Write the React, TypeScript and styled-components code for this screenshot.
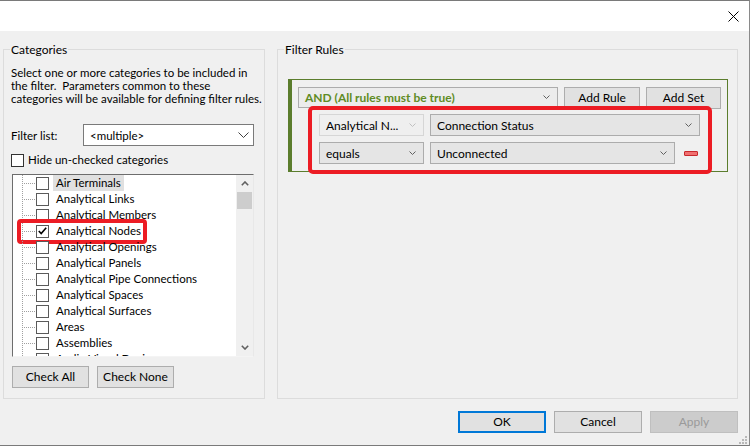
import React from 'react';
import styled, { createGlobalStyle } from 'styled-components';

const GlobalStyle = createGlobalStyle`
    html, body {
        margin: 0;
        padding: 0;
        background: #ffffff;
    }
    body {
        font-family: Lato, "Noto Sans", sans-serif;
        font-size: 11.5px;
        color: #000000;
    }
    * {
        box-sizing: border-box;
    }
`;

const RED = '#ec1c24';
const GREEN = '#5b7d2d';

const StyledWindow = styled.div`
    width: 750px;
    height: 446px;
    display: flex;
    flex-direction: column;
    background: #f0f0f0;
    border-top: 1px solid #7a7a7a;
    border-bottom: 1px solid #7a7a7a;
    border-right: 1px solid #8a8a8a;
    position: relative;
`;

const StyledTitleBar = styled.div`
    height: 30px;
    flex-shrink: 0;
    background: #ffffff;
    display: flex;
    align-items: center;
    justify-content: flex-end;
    padding-right: 10px;
`;

const StyledBody = styled.div`
    flex: 1;
    display: flex;
    flex-direction: column;
    padding: 18px 11px 12px 3px;
`;

const StyledPanels = styled.div`
    display: flex;
    gap: 12px;
    height: 350px;
`;

const StyledGroup = styled.div<{ width: number }>`
    width: ${({ width }) => width}px;
    height: 100%;
    border: 1px solid #dcdcdc;
    display: flex;
    flex-direction: column;
`;

const StyledLegend = styled.div`
    align-self: flex-start;
    margin: -8px 0 0 6px;
    padding: 0 1px;
    line-height: 16px;
    font-size: 12px;
    background: #f0f0f0;
`;

const StyledCategories = styled.div`
    display: flex;
    flex-direction: column;
    padding: 0 10px 0 7px;
`;

const StyledDescription = styled.div`
    margin-top: 8px;
    line-height: 13px;
    white-space: nowrap;
`;

const StyledFilterRow = styled.div`
    margin-top: 19px;
    height: 22px;
    display: flex;
    align-items: center;
`;

const StyledFieldLabel = styled.span`
    width: 72px;
    padding-top: 1px;
`;

const StyledCombo = styled.div`
    flex: 1;
    height: 22px;
    background: #ffffff;
    border: 1px solid #7a7a7a;
    display: flex;
    align-items: center;
    justify-content: space-between;
    padding: 0 4px 0 6px;
`;

const StyledCheckRow = styled.label`
    margin-top: 7px;
    display: flex;
    align-items: center;
    gap: 4px;
    line-height: 14px;
`;

const StyledCheckbox = styled.span`
    width: 13px;
    height: 13px;
    flex-shrink: 0;
    background: #ffffff;
    border: 1px solid #333333;
    display: flex;
    align-items: center;
    justify-content: center;
`;

const StyledTree = styled.div`
    margin: 7px 0 0 1px;
    height: 183px;
    display: flex;
    border: 1px solid;
    border-color: #6d6d6d #e8e8e8 #f4f4f4 #6d6d6d;
    background: #ffffff;
`;

const StyledTreeList = styled.div`
    flex: 1;
    overflow: hidden;
`;

const StyledTreeRow = styled.div`
    height: 16px;
    display: flex;
    align-items: center;
    padding-left: 9px;
    position: relative;
`;

const StyledConnector = styled.span`
    width: 13px;
    height: 16px;
    flex-shrink: 0;
    background-image:
        repeating-linear-gradient(to bottom, #a0a0a0 0 1px, transparent 1px 2px),
        repeating-linear-gradient(to right, #a0a0a0 0 1px, transparent 1px 2px);
    background-size: 1px 100%, 100% 1px;
    background-position: 0 0, 0 8px;
    background-repeat: no-repeat;
`;

const StyledTreeCheck = styled(StyledCheckbox)`
    margin-left: 1px;
    border-color: #5a5a5a;
`;

const StyledItemText = styled.span<{ selected?: boolean }>`
    margin-left: 4px;
    padding: 0 3px;
    height: 16px;
    line-height: 16px;
    white-space: nowrap;
    background: ${({ selected }) => (selected ? '#e0e0e0' : 'transparent')};
`;

const StyledAnnotation = styled.span`
    position: absolute;
    left: 4px;
    top: -4px;
    width: 130px;
    height: 25px;
    border: 4px solid ${RED};
    border-radius: 4px;
    pointer-events: none;
`;

const StyledScrollbar = styled.div`
    width: 17px;
    flex-shrink: 0;
    background: #f0f0f0;
    display: flex;
    flex-direction: column;
`;

const StyledScrollArrow = styled.div`
    height: 17px;
    display: flex;
    align-items: center;
    justify-content: center;
`;

const StyledThumb = styled.div`
    height: 17px;
    margin: 0 1px;
    background: #cdcdcd;
`;

const StyledSpacer = styled.div`
    flex: 1;
`;

const StyledButtonRow = styled.div`
    margin: 9px 0 0 1px;
    display: flex;
    gap: 8px;
`;

const StyledButton = styled.button<{ width: number; focused?: boolean }>`
    width: ${({ width }) => width}px;
    height: 22px;
    padding: 0;
    font-family: inherit;
    font-size: 12px;
    color: ${({ disabled }) => (disabled ? '#9a9a9a' : '#000000')};
    background: ${({ disabled }) => (disabled ? '#cccccc' : '#e1e1e1')};
    border: ${({ focused }) => (focused ? 2 : 1)}px solid
        ${({ focused, disabled }) => (focused ? '#0078d7' : disabled ? '#bfbfbf' : '#adadad')};
    line-height: 18px;
`;

const StyledRulesPanel = styled.div`
    display: flex;
    flex-direction: column;
    padding: 0 9px 0 10px;
`;

const StyledRuleSet = styled.div`
    margin-top: 21px;
    border: 1px solid ${GREEN};
    border-left-width: 4px;
    padding: 7px 6px 0 6px;
    display: flex;
    flex-direction: column;
`;

const StyledSetHeader = styled.div`
    display: flex;
    gap: 6px;
    height: 21px;
`;

const StyledDropdown = styled.div<{ width?: number; disabled?: boolean; bold?: boolean }>`
    ${({ width }) => (width ? `width: ${width}px; flex-shrink: 0;` : 'flex: 1;')}
    height: ${({ bold }) => (bold ? 21 : 22)}px;
    display: flex;
    align-items: center;
    justify-content: space-between;
    padding: 0 7px 0 6px;
    border: 1px solid ${({ disabled }) => (disabled ? '#d6d6d6' : '#acacac')};
    background: ${({ disabled, bold }) => (disabled ? '#efefef' : bold ? '#ececec' : '#e5e5e5')};
    color: ${({ bold }) => (bold ? '#5f8b24' : '#000000')};
    font-size: 12px;
    font-weight: ${({ bold }) => (bold ? 700 : 400)};
    white-space: nowrap;
`;

const StyledRulesBox = styled.div`
    margin: -2px 9px -3px 10px;
    border: 4px solid ${RED};
    border-radius: 5px;
    padding: 4px 8px 6px 7px;
    display: flex;
    flex-direction: column;
    gap: 6px;
`;

const StyledRuleRow = styled.div`
    display: flex;
    align-items: center;
    gap: 6px;
`;

const StyledRemove = styled.span`
    width: 14px;
    height: 5px;
    margin: 0 2px 0 3px;
    flex-shrink: 0;
    background: #f07070;
    border: 1px solid #c8282c;
    border-radius: 1px;
`;

const StyledFooter = styled.div`
    margin-top: 12px;
    display: flex;
    justify-content: flex-end;
    gap: 8px;
`;

const StyledGrip = styled.svg`
    position: absolute;
    right: 2px;
    bottom: 1px;
`;

const Chevron = ({ size = 7, color = '#606060' }: { size?: number; color?: string }) => (
    <svg width={size} height={Math.ceil(size / 2) + 1} viewBox={`0 0 ${size} ${Math.ceil(size / 2) + 1}`}>
        <polyline
            points={`0.5,0.5 ${size / 2},${size / 2} ${size - 0.5},0.5`}
            fill="none"
            stroke={color}
            strokeWidth="1"
        />
    </svg>
);

const ScrollChevron = ({ up }: { up?: boolean }) => (
    <svg width="8" height="5" viewBox="0 0 8 5">
        <polyline
            points={up ? '0.8,4.2 4,1 7.2,4.2' : '0.8,0.8 4,4 7.2,0.8'}
            fill="none"
            stroke="#606060"
            strokeWidth="1.6"
        />
    </svg>
);

const CheckMark = () => (
    <svg width="9" height="8" viewBox="0 0 9 8">
        <polyline points="0.8,4 3.2,6.6 8.2,0.8" fill="none" stroke="#000" strokeWidth="1.6" />
    </svg>
);

const categories = [
    'Air Terminals',
    'Analytical Links',
    'Analytical Members',
    'Analytical Nodes',
    'Analytical Openings',
    'Analytical Panels',
    'Analytical Pipe Connections',
    'Analytical Spaces',
    'Analytical Surfaces',
    'Areas',
    'Assemblies',
    'Audio Visual Devices',
];

export default function App() {
    return (
        <>
            <GlobalStyle />
            <StyledWindow>
                <StyledTitleBar>
                    <svg width="11" height="11" viewBox="0 0 11 11">
                        <path d="M0.5,0.5 L10.5,10.5 M10.5,0.5 L0.5,10.5" stroke="#000" strokeWidth="1" />
                    </svg>
                </StyledTitleBar>
                <StyledBody>
                    <StyledPanels>
                        <StyledGroup width={262}>
                            <StyledLegend>Categories</StyledLegend>
                            <StyledCategories>
                                <StyledDescription>
                                    Select one or more categories to be included in
                                    <br />
                                    the filter.{'\u00a0 '}Parameters common to these
                                    <br />
                                    categories will be available for defining filter rules.
                                </StyledDescription>
                                <StyledFilterRow>
                                    <StyledFieldLabel>Filter list:</StyledFieldLabel>
                                    <StyledCombo>
                                        <span>&lt;multiple&gt;</span>
                                        <Chevron size={11} color="#404040" />
                                    </StyledCombo>
                                </StyledFilterRow>
                                <StyledCheckRow>
                                    <StyledCheckbox />
                                    Hide un-checked categories
                                </StyledCheckRow>
                                <StyledTree>
                                    <StyledTreeList>
                                        {categories.map((name, i) => (
                                            <StyledTreeRow key={name}>
                                                <StyledConnector />
                                                <StyledTreeCheck>{i === 3 && <CheckMark />}</StyledTreeCheck>
                                                <StyledItemText selected={i === 0}>{name}</StyledItemText>
                                                {i === 3 && <StyledAnnotation />}
                                            </StyledTreeRow>
                                        ))}
                                    </StyledTreeList>
                                    <StyledScrollbar>
                                        <StyledScrollArrow>
                                            <ScrollChevron up />
                                        </StyledScrollArrow>
                                        <StyledThumb />
                                        <StyledSpacer />
                                        <StyledScrollArrow>
                                            <ScrollChevron />
                                        </StyledScrollArrow>
                                    </StyledScrollbar>
                                </StyledTree>
                                <StyledButtonRow>
                                    <StyledButton width={77}>Check All</StyledButton>
                                    <StyledButton width={77}>Check None</StyledButton>
                                </StyledButtonRow>
                            </StyledCategories>
                        </StyledGroup>
                        <StyledGroup width={461}>
                            <StyledLegend>Filter Rules</StyledLegend>
                            <StyledRulesPanel>
                                <StyledRuleSet>
                                    <StyledSetHeader>
                                        <StyledDropdown bold>
                                            <span>AND (All rules must be true)</span>
                                            <Chevron />
                                        </StyledDropdown>
                                        <StyledButton width={76}>Add Rule</StyledButton>
                                        <StyledButton width={75}>Add Set</StyledButton>
                                    </StyledSetHeader>
                                    <StyledRulesBox>
                                        <StyledRuleRow>
                                            <StyledDropdown width={105} disabled>
                                                <span>Analytical N...</span>
                                                <Chevron color="#c0c0c0" />
                                            </StyledDropdown>
                                            <StyledDropdown>
                                                <span>Connection Status</span>
                                                <Chevron />
                                            </StyledDropdown>
                                        </StyledRuleRow>
                                        <StyledRuleRow>
                                            <StyledDropdown width={105}>
                                                <span>equals</span>
                                                <Chevron />
                                            </StyledDropdown>
                                            <StyledDropdown>
                                                <span>Unconnected</span>
                                                <Chevron />
                                            </StyledDropdown>
                                            <StyledRemove />
                                        </StyledRuleRow>
                                    </StyledRulesBox>
                                </StyledRuleSet>
                            </StyledRulesPanel>
                        </StyledGroup>
                    </StyledPanels>
                    <StyledFooter>
                        <StyledButton width={88} focused>OK</StyledButton>
                        <StyledButton width={88}>Cancel</StyledButton>
                        <StyledButton width={88} disabled>Apply</StyledButton>
                    </StyledFooter>
                </StyledBody>
                <StyledGrip width="8" height="8" viewBox="0 0 8 8">
                    <rect x="6" y="0" width="2" height="2" fill="#b8b8b8" />
                    <rect x="3" y="3" width="2" height="2" fill="#b8b8b8" />
                    <rect x="6" y="3" width="2" height="2" fill="#b8b8b8" />
                    <rect x="0" y="6" width="2" height="2" fill="#b8b8b8" />
                    <rect x="3" y="6" width="2" height="2" fill="#b8b8b8" />
                    <rect x="6" y="6" width="2" height="2" fill="#b8b8b8" />
                </StyledGrip>
            </StyledWindow>
        </>
    );
}
